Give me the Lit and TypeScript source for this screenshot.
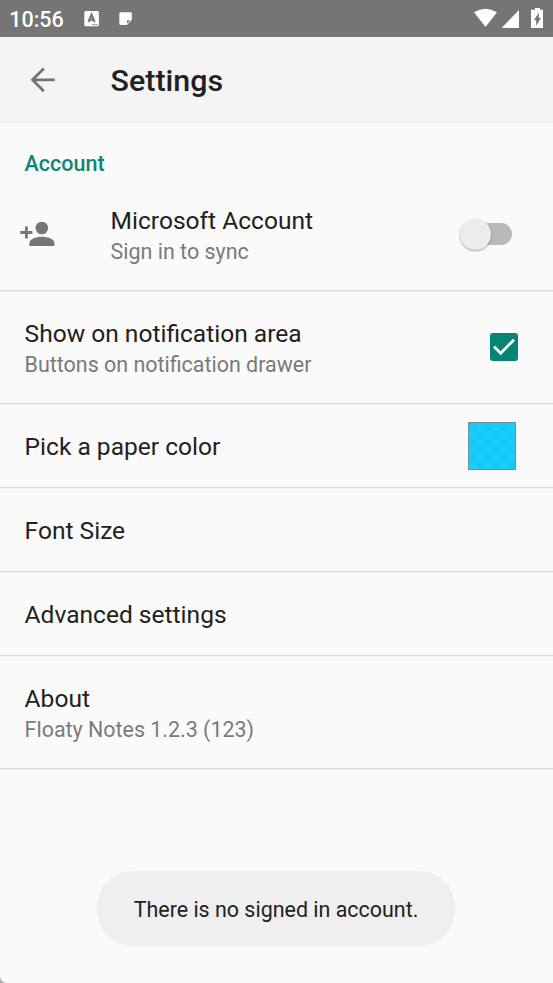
import { LitElement, html, css } from "lit";
import { customElement, property } from "lit/decorators.js";

@customElement("settings-row")
class SettingsRow extends LitElement {
  @property() heading = "";
  @property() summary = "";

  static styles = css`
    :host {
      display: flex;
      box-sizing: border-box;
      height: 84px;
      align-items: center;
      padding-left: 24.6px;
      border-bottom: 1px solid #d9d9d9;
      box-shadow: 0 1px 0 #f1f1f1;
    }
    :host([summary]) {
      height: 113px;
    }
    .text {
      flex: 1;
      padding-top: 2px;
      white-space: nowrap;
    }
    .heading {
      font-size: 24.55px;
      line-height: 32px;
      color: #212121;
    }
    .summary {
      font-size: 21.45px;
      line-height: 29px;
      color: #7a7a7a;
    }
  `;

  render() {
    return html`
      <slot name="icon"></slot>
      <div class="text">
        <div class="heading">${this.heading}</div>
        ${this.summary ? html`<div class="summary">${this.summary}</div>` : ""}
      </div>
      <slot name="control"></slot>
    `;
  }
}

@customElement("app-root")
class AppRoot extends LitElement {
  static styles = css`
    :host {
      display: flex;
      flex-direction: column;
      position: relative;
      box-sizing: border-box;
      height: 983px;
      overflow: hidden;
      background: #fafafa;
      color: #212121;
      font-family: Roboto, sans-serif;
    }
    svg {
      display: block;
    }
    .status {
      display: flex;
      height: 37px;
      flex: none;
      background: #757575;
      color: #fff;
    }
    .clock {
      width: 84px;
      box-sizing: border-box;
      padding-left: 9.2px;
      font-size: 21.5px;
      font-weight: 500;
      line-height: 39px;
    }
    .spacer {
      flex: 1;
    }
    .bar {
      display: flex;
      flex: none;
      align-items: center;
      height: 86px;
      background: #f4f4f4;
    }
    .back {
      width: 110.6px;
    }
    .title {
      font-size: 30.4px;
      font-weight: 500;
      line-height: 40px;
      padding-top: 2px;
    }
    .category {
      flex: none;
      box-sizing: border-box;
      height: 55px;
      padding: 26px 0 0 24.6px;
      font-size: 21.5px;
      line-height: 30px;
      font-weight: 500;
      color: #0f8575;
    }
    .person {
      width: 86px;
    }
    .switch {
      display: flex;
      align-items: center;
      width: 52px;
      margin-right: 41px;
    }
    .thumb {
      width: 31px;
      height: 31px;
      flex: none;
      border-radius: 50%;
      background: #ececec;
      box-shadow: 0 1px 2px rgba(0, 0, 0, 0.35);
      z-index: 1;
    }
    .track {
      width: 36px;
      height: 22px;
      flex: none;
      margin-left: -15px;
      border-radius: 11px;
      background: #b9b9b9;
    }
    .check {
      margin-right: 35px;
    }
    .swatch {
      margin-right: 37px;
      box-sizing: border-box;
      width: 48px;
      height: 48px;
      border: 1.5px solid #7b8f97;
      background: repeating-conic-gradient(#19cdfc 0 25%, #14c8f8 0 50%) 0 0 / 15.4px 15.4px;
    }
    .toast {
      position: absolute;
      left: 97px;
      top: 871px;
      width: 358px;
      height: 75px;
      border-radius: 36px;
      background: #efefef;
      text-align: center;
      font-size: 21.45px;
      line-height: 77px;
      white-space: nowrap;
    }
    .corner {
      position: absolute;
      left: 0;
      bottom: 0;
    }
  `;

  render() {
    return html`
      <div class="status">
        <div class="clock">10:56</div>
        <svg width="60" height="37" viewBox="84 0 60 37">
          <rect x="84.3" y="11" width="14.6" height="15.3" rx="1.5" fill="#fff" />
          <path d="M88.4 22 91.5 14.6 94.6 22M89.5 19.8h4" fill="none" stroke="#757575" stroke-width="2" />
          <path d="M92 24.5h6" stroke="#757575" stroke-width="1" stroke-dasharray="1.3 .8" />
          <path d="M120.8 12.3h9.7q1.3 0 1.3 1.3v6.5l-5 5h-6q-1.5 0-1.5-1.5v-9.8q0-1.5 1.5-1.5z" fill="#fff" />
          <path d="M127 23.5V20.3h3.5z" fill="#757575" />
        </svg>
        <div class="spacer"></div>
        <svg width="80" height="37" viewBox="473 0 80 37">
          <path d="M474 12.3Q485.5 5 497 12.3L485.5 27z" fill="#fff" />
          <path d="M519 10v18h-17.5z" fill="#fff" />
          <path d="M532 9.7h3V8h5v1.7h3V28h-12V9.7z" fill="#fff" />
          <path d="M538.8 12.500v5.500h2.200l-4.800 8v-5.700h-2.200z" fill="#757575" />
        </svg>
      </div>

      <div class="bar">
        <svg class="back" width="111" height="86" viewBox="0 37 111 86">
          <path d="M55 79.8H32.5M44 68.4 32.6 79.8 44 91.2" fill="none" stroke="#747474" stroke-width="2.800" />
        </svg>
        <div class="title">Settings</div>
      </div>

      <div class="category">Account</div>

      <settings-row heading="Microsoft Account" summary="Sign in to sync">
        <svg slot="icon" class="person" width="86" height="112" viewBox="24.6 178 86 112" overflow="visible">
          <circle cx="41.4" cy="228" r="6.3" fill="#757575" />
          <path d="M29 246v-3c0-4.2 7.2-6.2 12.5-6.2S54 238.800 54 243v3z" fill="#757575" />
          <path d="M20 232.500h12M26 226.500v12" stroke="#757575" stroke-width="2.800" />
        </svg>
        <div slot="control" class="switch">
          <div class="thumb"></div>
          <div class="track"></div>
        </div>
      </settings-row>
      <settings-row heading="Show on notification area" summary="Buttons on notification drawer">
        <svg slot="control" class="check" width="28" height="28" viewBox="0 0 28 28">
          <rect width="28" height="28" rx="3" fill="#048576" />
          <path d="M4 13.500 10.700 20.200 24 6.800" fill="none" stroke="#fff" stroke-width="2.800" />
        </svg>
      </settings-row>
      <settings-row heading="Pick a paper color">
        <div slot="control" class="swatch"></div>
      </settings-row>
      <settings-row heading="Font Size"></settings-row>
      <settings-row heading="Advanced settings"></settings-row>
      <settings-row heading="About" summary="Floaty Notes 1.2.3 (123)"></settings-row>

      <div class="toast">There is no signed in account.</div>
      <svg class="corner" width="6" height="6" viewBox="0 0 6 6">
        <path d="M0 0Q1 5 6 6H0z" fill="#aaa" />
      </svg>
    `;
  }
}
